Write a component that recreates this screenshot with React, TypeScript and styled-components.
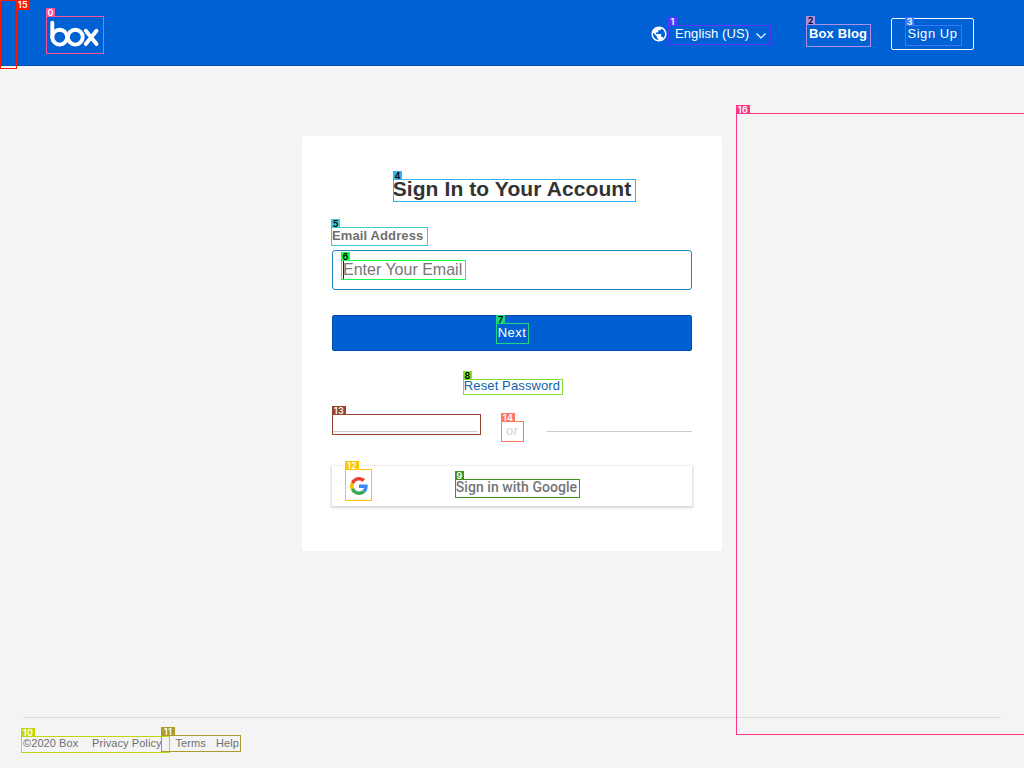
import React from "react";
import styled, { createGlobalStyle } from "styled-components";

const GlobalStyle = createGlobalStyle`
  * { box-sizing: border-box; }
  body { margin: 0; background: #f4f4f4; font-family: "Liberation Sans", Arial, sans-serif; }
  a { color: inherit; text-decoration: none; }
`;

const Page = styled.div`
  position: relative;
  display: flex;
  flex-direction: column;
  width: 1024px;
  height: 768px;
  overflow: hidden;
`;

const Header = styled.header`
  display: flex;
  align-items: flex-start;
  justify-content: space-between;
  flex: none;
  height: 66px;
  padding: 18px 50px 0;
  background: #0061d5;
  border-bottom: 1px solid #0053b3;
  color: #fff;
`;

const Logo = styled.svg`
  display: block;
  width: 51px;
  height: 30px;
  margin-top: 1px;
`;

const Nav = styled.nav`
  display: flex;
  align-items: center;
  height: 32px;
  font-size: 13px;
  line-height: 15px;
`;

const Language = styled.div`
  display: flex;
  align-items: center;
  width: 158px;
  letter-spacing: 0.1px;
`;

const Globe = styled.svg`
  width: 18px;
  height: 18px;
  margin-right: 7px;
`;

const Chevron = styled.svg`
  width: 10px;
  height: 6px;
  margin: 3px 0 0 7px;
`;

const NavText = styled.span`
  padding-bottom: 2px;
`;

const BlogLink = styled.a`
  width: 83px;
  padding: 0 0 2px 1px;
  font-weight: bold;
  letter-spacing: 0.12px;
`;

const SignUp = styled.a`
  width: 83px;
  height: 32px;
  border: 1px solid #fff;
  border-radius: 2px;
  line-height: 30px;
  text-align: center;
  letter-spacing: 0.55px;
`;

const Main = styled.main`
  display: flex;
  justify-content: center;
  align-items: flex-start;
  flex: 1;
  padding-top: 70px;
`;

const Card = styled.form`
  display: flex;
  flex-direction: column;
  width: 420px;
  height: 415px;
  padding: 40px 30px 0;
  border-radius: 3px;
  background: #fff;
`;

const Title = styled.h1`
  margin: 0;
  font-size: 21px;
  line-height: 26px;
  text-align: center;
  letter-spacing: 0.1px;
  color: #333;
`;

const Label = styled.label`
  margin-top: 26px;
  font-size: 13px;
  line-height: 16px;
  font-weight: bold;
  letter-spacing: 0.12px;
  color: #6f6f6f;
`;

const Field = styled.div`
  display: flex;
  align-items: center;
  height: 40px;
  margin-top: 6px;
  padding: 0 10px;
  border: 1px solid #2486b8;
  border-radius: 3px;
  color: #767676;
  font-size: 16px;
`;

const Caret = styled.span`
  width: 1px;
  height: 18px;
  margin-right: -1px;
  background: #222;
`;

const NextButton = styled.button`
  height: 36px;
  margin-top: 25px;
  padding: 0 0 1px;
  border: 1px solid #004eac;
  border-radius: 2px;
  background: #005fd2;
  color: #fff;
  font: 13px "Liberation Sans", Arial, sans-serif;
  letter-spacing: 0.5px;
`;

const ResetLink = styled.a`
  margin-top: 27px;
  font-size: 13px;
  line-height: 16px;
  text-align: center;
  letter-spacing: 0.12px;
  color: #0f62ac;
`;

const Divider = styled.div`
  display: flex;
  align-items: center;
  justify-content: space-between;
  height: 16px;
  margin-top: 29px;
  font-size: 13px;
  letter-spacing: 0.3px;
  color: #d2d2d2;
`;

const DividerText = styled.span`
  padding-bottom: 2px;
`;

const Rule = styled.span`
  width: 145px;
  height: 1px;
  background: #ccc;
`;

const GoogleButton = styled.div`
  display: grid;
  grid-template-columns: 54px 1fr 45px;
  align-items: center;
  height: 40px;
  margin-top: 27px;
  background: #fff;
  box-shadow: 0 1px 2px 1px rgba(0, 0, 0, 0.16);
  color: #757575;
  font: 500 14px Roboto, sans-serif;
  letter-spacing: 0.05px;
  text-align: center;
`;

const GoogleText = styled.span`
  padding-top: 2px;
`;

const GoogleIcon = styled.svg`
  width: 18px;
  height: 18px;
  margin-left: 18px;
`;

const Footer = styled.footer`
  display: flex;
  flex: none;
  height: 51px;
  margin: 0 23px;
  padding-top: 18px;
  border-top: 1px solid #dcdcdc;
  color: #6f6f6f;
  font-size: 11px;
  line-height: 14px;
  letter-spacing: 0.08px;
`;

const FooterItem = styled.a<{ $width: number }>`
  width: ${(p) => p.$width}px;
  white-space: nowrap;
`;

const Region = styled.div<{ $box: number[]; $color: string }>`
  position: absolute;
  left: ${(p) => p.$box[0]}px;
  top: ${(p) => p.$box[1]}px;
  width: ${(p) => p.$box[2]}px;
  height: ${(p) => p.$box[3]}px;
  border: 1px solid ${(p) => p.$color};
  pointer-events: none;
`;

const Tag = styled.span<{ $color: string; $dark?: boolean; $wide: boolean; $side?: boolean }>`
  position: absolute;
  left: ${(p) => (p.$side ? 15 : -1)}px;
  top: ${(p) => (p.$side ? -1 : -9)}px;
  width: ${(p) => (p.$wide ? 14 : 9)}px;
  height: ${(p) => (p.$side ? 10 : 9)}px;
  background: ${(p) => p.$color};
  color: ${(p) => (p.$dark ? "#000" : "#fff")};
  font: 600 9px/10px Inter, sans-serif;
  letter-spacing: ${(p) => (p.$wide ? 0.4 : 0)}px;
  text-align: center;
`;

type Mark = { id: number; box: number[]; color: string; dark?: boolean };

const marks: Mark[] = [
  { id: 0, box: [46, 16, 58, 38], color: "#ff4f9f" },
  { id: 1, box: [668, 25, 103, 20], color: "#5538ff" },
  { id: 2, box: [806, 24, 65, 23], color: "#ad91e8", dark: true },
  { id: 3, box: [905, 25, 57, 21], color: "#3b78ff" },
  { id: 4, box: [393, 179, 243, 23], color: "#35b2f5", dark: true },
  { id: 5, box: [331, 227, 97, 19], color: "#3accd0", dark: true },
  { id: 6, box: [341, 260, 125, 20], color: "#13ff50", dark: true },
  { id: 7, box: [496, 323, 33, 21], color: "#1bd581", dark: true },
  { id: 8, box: [463, 379, 100, 16], color: "#82df30", dark: true },
  { id: 9, box: [455, 479, 125, 19], color: "#3e951e" },
  { id: 10, box: [21, 736, 149, 17], color: "#c3d60b" },
  { id: 11, box: [161, 735, 80, 17], color: "#ad9b2e" },
  { id: 12, box: [345, 469, 27, 32], color: "#ffc300" },
  { id: 13, box: [332, 414, 149, 21], color: "#98432f" },
  { id: 14, box: [501, 421, 23, 21], color: "#ff7763" },
  { id: 15, box: [0, 0, 17, 69], color: "#fd1800" },
  { id: 16, box: [736, 113, 300, 622], color: "#ff3489" },
];

export default function App() {
  return (
    <Page>
      <GlobalStyle />
      <Header>
        <Logo viewBox="0 0 51 30" fill="none" stroke="#fff" strokeWidth="3.9" strokeLinecap="round">
          <path d="M2.300 3.600v14.600" />
          <circle cx="9.700" cy="18.200" r="7.400" />
          <circle cx="25.300" cy="18.200" r="7.400" />
          <path d="M35.800 11.700 46.500 25M46.500 11.700 35.800 25" />
        </Logo>
        <Nav>
          <Language>
            <Globe viewBox="0 0 24 24" fill="#fff">
              <path d="M12 2C6.48 2 2 6.48 2 12s4.48 10 10 10 10-4.48 10-10S17.52 2 12 2zm-1 17.93c-3.95-.49-7-3.85-7-7.93 0-.62.08-1.21.21-1.79L9 15v1c0 1.1.9 2 2 2v1.93zm6.9-2.54c-.26-.81-1-1.39-1.9-1.39h-1v-3c0-.55-.45-1-1-1H8v-2h2c.55 0 1-.45 1-1V7h2c1.1 0 2-.9 2-2v-.41c2.93 1.19 5 4.06 5 7.41 0 2.08-.8 3.97-2.1 5.39z" />
            </Globe>
            <NavText>English (US)</NavText>
            <Chevron viewBox="0 0 10 6" fill="none" stroke="#fff" strokeWidth="1.1">
              <path d="m.5.5 4.5 4.5L9.500.5" />
            </Chevron>
          </Language>
          <BlogLink>Box Blog</BlogLink>
          <SignUp>Sign Up</SignUp>
        </Nav>
      </Header>
      <Main>
        <Card>
          <Title>Sign In to Your Account</Title>
          <Label>Email Address</Label>
          <Field>
            <Caret />
            Enter Your Email
          </Field>
          <NextButton type="button">Next</NextButton>
          <ResetLink>Reset Password</ResetLink>
          <Divider>
            <Rule />
            <DividerText>or</DividerText>
            <Rule />
          </Divider>
          <GoogleButton>
            <GoogleIcon viewBox="0 0 48 48">
              <path fill="#EA4335" d="M24 9.500c3.540 0 6.710 1.220 9.210 3.600l6.850-6.850C35.900 2.380 30.470 0 24 0 14.620 0 6.510 5.380 2.560 13.220l7.980 6.190C12.430 13.720 17.740 9.500 24 9.500z" />
              <path fill="#4285F4" d="M46.980 24.550c0-1.570-.15-3.090-.38-4.550H24v9.020h12.940c-.58 2.960-2.260 5.480-4.780 7.180l7.730 6c4.510-4.180 7.090-10.360 7.090-17.650z" />
              <path fill="#FBBC05" d="M10.530 28.590c-.48-1.450-.76-2.990-.76-4.590s.27-3.140.76-4.590l-7.980-6.190C.92 16.460 0 20.120 0 24s.92 7.540 2.560 10.780l7.970-6.190z" />
              <path fill="#34A853" d="M24 48c6.480 0 11.930-2.130 15.890-5.810l-7.730-6c-2.150 1.450-4.920 2.300-8.160 2.300-6.260 0-11.570-4.220-13.470-9.910l-7.980 6.190C6.510 42.620 14.620 48 24 48z" />
            </GoogleIcon>
            <GoogleText>Sign in with Google</GoogleText>
          </GoogleButton>
        </Card>
      </Main>
      <Footer>
        <FooterItem $width={69}>©2020 Box</FooterItem>
        <FooterItem $width={83.5}>Privacy Policy</FooterItem>
        <FooterItem $width={40.5}>Terms</FooterItem>
        <FooterItem $width={30}>Help</FooterItem>
      </Footer>
      {marks.map((m) => (
        <Region key={m.id} $box={m.box} $color={m.color}>
          <Tag $color={m.color} $dark={m.dark} $wide={m.id > 9} $side={m.id === 15}>
            {m.id}
          </Tag>
        </Region>
      ))}
    </Page>
  );
}
